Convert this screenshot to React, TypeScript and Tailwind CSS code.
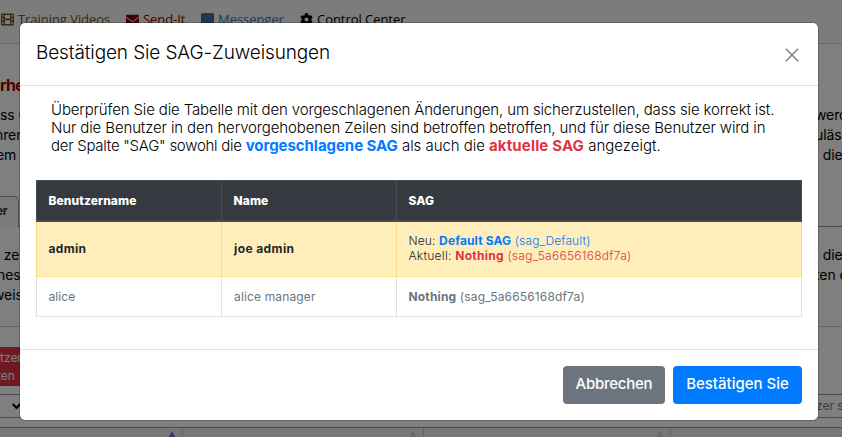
import type { ReactNode } from "react";
import { FaEnvelope, FaCommentAlt, FaCog } from "react-icons/fa";

function Line({ left, right, className = "", shift = "" }: { left: string; right?: string; className?: string; shift?: string }) {
  return (
    <div className={"flex h-5 items-center overflow-hidden whitespace-pre text-[14px] leading-5 tracking-[-0.1px] text-black " + className}>
      <span className="w-[817px] shrink-0"><span className={shift}>{left}</span></span>
      <span className="-ml-0.5">{right}</span>
    </div>
  );
}

function FilmIcon() {
  return (
    <svg width="13" height="13" viewBox="0 0 13 13" fill="currentColor" fillRule="evenodd">
      <path d="M1 .5h11a1 1 0 0 1 1 1v10a1 1 0 0 1-1 1H1a1 1 0 0 1-1-1v-10a1 1 0 0 1 1-1ZM1.2 2v1.6h1.5V2ZM1.2 5.6v1.7h1.5V5.6ZM1.2 9.3V11h1.5V9.3ZM10.3 2v1.6h1.5V2ZM10.3 5.6v1.7h1.5V5.6ZM10.3 9.3V11h1.5V9.3ZM4 2v3.6h5V2ZM4 7.2V11h5V7.2Z" />
    </svg>
  );
}

function NavItem({ icon, label, className }: { icon: ReactNode; label: string; className: string }) {
  return (
    <span className={"flex shrink-0 items-center gap-1 whitespace-nowrap " + className}>
      {icon}
      {label}
    </span>
  );
}

function Page() {
  return (
    <div className="h-full overflow-hidden bg-white">
      <nav className="flex h-11 items-start border-b border-[#d0d0d0] bg-[#f8f8f8] pt-[10px] pl-px font-['Open_Sans',sans-serif] text-[13px] leading-[18px] tracking-[-0.05px]">
        <NavItem className="w-[125px] text-[#725627]" icon={<FilmIcon />} label="Training Videos" />
        <NavItem className="w-[75px] text-[#800000]" icon={<FaEnvelope size={13} />} label="Send-It" />
        <NavItem className="w-[99px] text-[#3e72a8]" icon={<FaCommentAlt size={13} />} label="Messenger" />
        <NavItem className="text-black" icon={<FaCog size={13} />} label="Control Center" />
      </nav>
      <h1 className="h-[61px] pt-[30px] text-[16px] leading-[22px] font-bold tracking-[-0.7px] text-[#a00000]">rhe</h1>
      <Line left="ss C" right="werd" />
      <Line left="hren" right="uläss" shift="-ml-[5px]" />
      <Line left="em" right="  die" shift="-ml-1" />
      <div className="flex h-[62px] items-end">
        <div className="h-[31px] w-[19px] rounded-tr-[5px] border-t border-r border-[#999] bg-[#f4f4f4] pt-1 text-[12px] leading-[20px] font-bold tracking-[-0.3px] text-[#333]">
          <span className="-ml-1">er</span>
        </div>
        <div className="flex-1 border-b border-[#999]" />
      </div>
      <Line className="mt-[18px]" left=" zei" right="  die" />
      <Line left="nes" right="ten e" shift="-ml-[3px]" />
      <Line left="weis" shift="-ml-[7px]" />
      <div className="mt-[21px] h-[21px] border-t border-[#ccc]" />
      <div className="h-[39px] w-24 bg-[#dc3545] pt-0.5 text-[12px] leading-[18px] text-white">
        <div>tzer</div>
        <div className="-ml-[3px]">ten</div>
      </div>
      <div className="mt-2 flex h-6 items-center border-y border-[#999] text-[12px] text-[#777]">
        <svg className="ml-3 shrink-0 text-black" width="9" height="7" viewBox="0 0 9 7" fill="none" stroke="currentColor" strokeWidth="2.2">
          <path d="M.7 1 4.5 5 8.3 1" />
        </svg>
        <span className="ml-[795px] whitespace-nowrap">zer s</span>
      </div>
      <div className="mt-[9px] flex h-5 border-t border-[#999] bg-[#eee]">
        {["w-[183px]", "w-[241px]", "w-[247px]"].map((w, i) => (
          <div key={w} className={"flex justify-end border-r border-[#ccc] pt-[3px] pr-[6px] " + w}>
            <svg width="8" height="7" viewBox="0 0 8 7" className={i === 0 ? "text-[#7070c8]" : "text-[#ccc]"}>
              <path d="M4 0 8 7H0Z" fill="currentColor" />
            </svg>
          </div>
        ))}
      </div>
    </div>
  );
}

function Dialog() {
  return (
    <div className="flex h-[397px] w-[798px] flex-col overflow-hidden rounded-[5px] bg-white shadow-[0_0_0_1px_#00000033]">
      <header className="flex h-[63px] shrink-0 justify-between border-b border-[#dee2e6] pt-4 pl-4">
        <h2 className="text-[19px] leading-[28px] font-[350] tracking-[-0.12px] whitespace-nowrap text-black">Bestätigen Sie SAG-Zuweisungen</h2>
        <svg className="mt-[9px] mr-[19px] text-[#808080]" width="14" height="14" viewBox="0 0 14 14" fill="none" stroke="currentColor" strokeWidth="1.5">
          <path d="m.8.8 12.4 12.4M13.2.8.8 13.2" />
        </svg>
      </header>
      <div className="h-[263px] shrink-0 px-4 pt-[15px]">
        <p className="h-[79px] pl-[15px] text-[15px] leading-[18px] font-[350] tracking-[-0.145px] whitespace-nowrap text-black">
          <span>Überprüfen Sie die Tabelle mit den vorgeschlagenen Änderungen, um sicherzustellen, dass sie korrekt ist.</span>
          <br />
          <span className="tracking-[-0.125px]">Nur die Benutzer in den hervorgehobenen Zeilen sind betroffen betroffen, und für diese Benutzer wird in</span>
          <br />
          <span className="tracking-[-0.27px]">der Spalte "SAG" sowohl die </span>
          <b className="tracking-[-0.05px] text-[#007bff]">vorgeschlagene SAG</b>
          <span className="tracking-[-0.05px]"> als auch die </span>
          <b className="tracking-[0.15px] text-[#dc3545]">aktuelle SAG</b>
          <span className="tracking-[0px]"> angezeigt.</span>
        </p>
        <table className="w-[766px] table-fixed border-collapse text-left text-[12px] leading-[15px] tracking-[0.08px]">
          <colgroup>
            <col className="w-[185px]" />
            <col className="w-[175px]" />
            <col />
          </colgroup>
          <thead>
            <tr className="h-[40px] bg-[#343a40] text-white">
              {["Benutzername", "Name", "SAG"].map((h) => (
                <th key={h} className="border border-b-2 border-[#454d55] px-[11.5px] py-0 font-extrabold">{h}</th>
              ))}
            </tr>
          </thead>
          <tbody>
            <tr className="h-[56px] bg-[#ffeeba]">
              <td className="border border-[#ffdf7e] px-[11.5px] pt-0 pb-px font-bold tracking-[0.3px]">admin</td>
              <td className="border border-[#ffdf7e] px-3 pt-0 pb-px font-bold tracking-[0.4px]">joe admin</td>
              <td className="border border-[#ffdf7e] px-[11.5px] pt-0 pb-px font-[350]">
                <div className="tracking-[0.14px]">Neu: <span className="text-[#007bff]"><b>Default SAG</b> (sag_Default)</span></div>
                <div className="tracking-[0.26px]">Aktuell: <span className="text-[#dc3545]"><b>Nothing</b> (sag_5a6656168df7a)</span></div>
              </td>
            </tr>
            <tr className="h-10 text-[#6c757d]">
              <td className="border border-[#dee2e6] border-t-[#ffdf7e] px-[11.5px] py-0">alice</td>
              <td className="border border-[#dee2e6] border-t-[#ffdf7e] px-3 py-0 tracking-[0.15px]">alice manager</td>
              <td className="border border-[#dee2e6] border-t-[#ffdf7e] px-[11.5px] py-0 tracking-[0.15px]"><b>Nothing</b> (sag_5a6656168df7a)</td>
            </tr>
          </tbody>
        </table>
      </div>
      <footer className="flex flex-1 justify-end gap-2 border-t border-[#dee2e6] pt-4 pr-4 text-[15px] font-medium text-white">
        <button className="h-[38px] w-[102px] rounded bg-[#6c757d] pb-px tracking-[-0.25px]">Abbrechen</button>
        <button className="h-[38px] w-[129px] rounded bg-[#007bff] pb-px">Bestätigen Sie</button>
      </footer>
    </div>
  );
}

export default function App() {
  return (
    <div className="relative h-[437px] w-[842px] overflow-hidden font-[Inter,'Noto_Sans',sans-serif] text-[#212529]">
      <Page />
      <div className="absolute inset-0 bg-black/50 pt-[23px] pl-5">
        <Dialog />
      </div>
    </div>
  );
}
